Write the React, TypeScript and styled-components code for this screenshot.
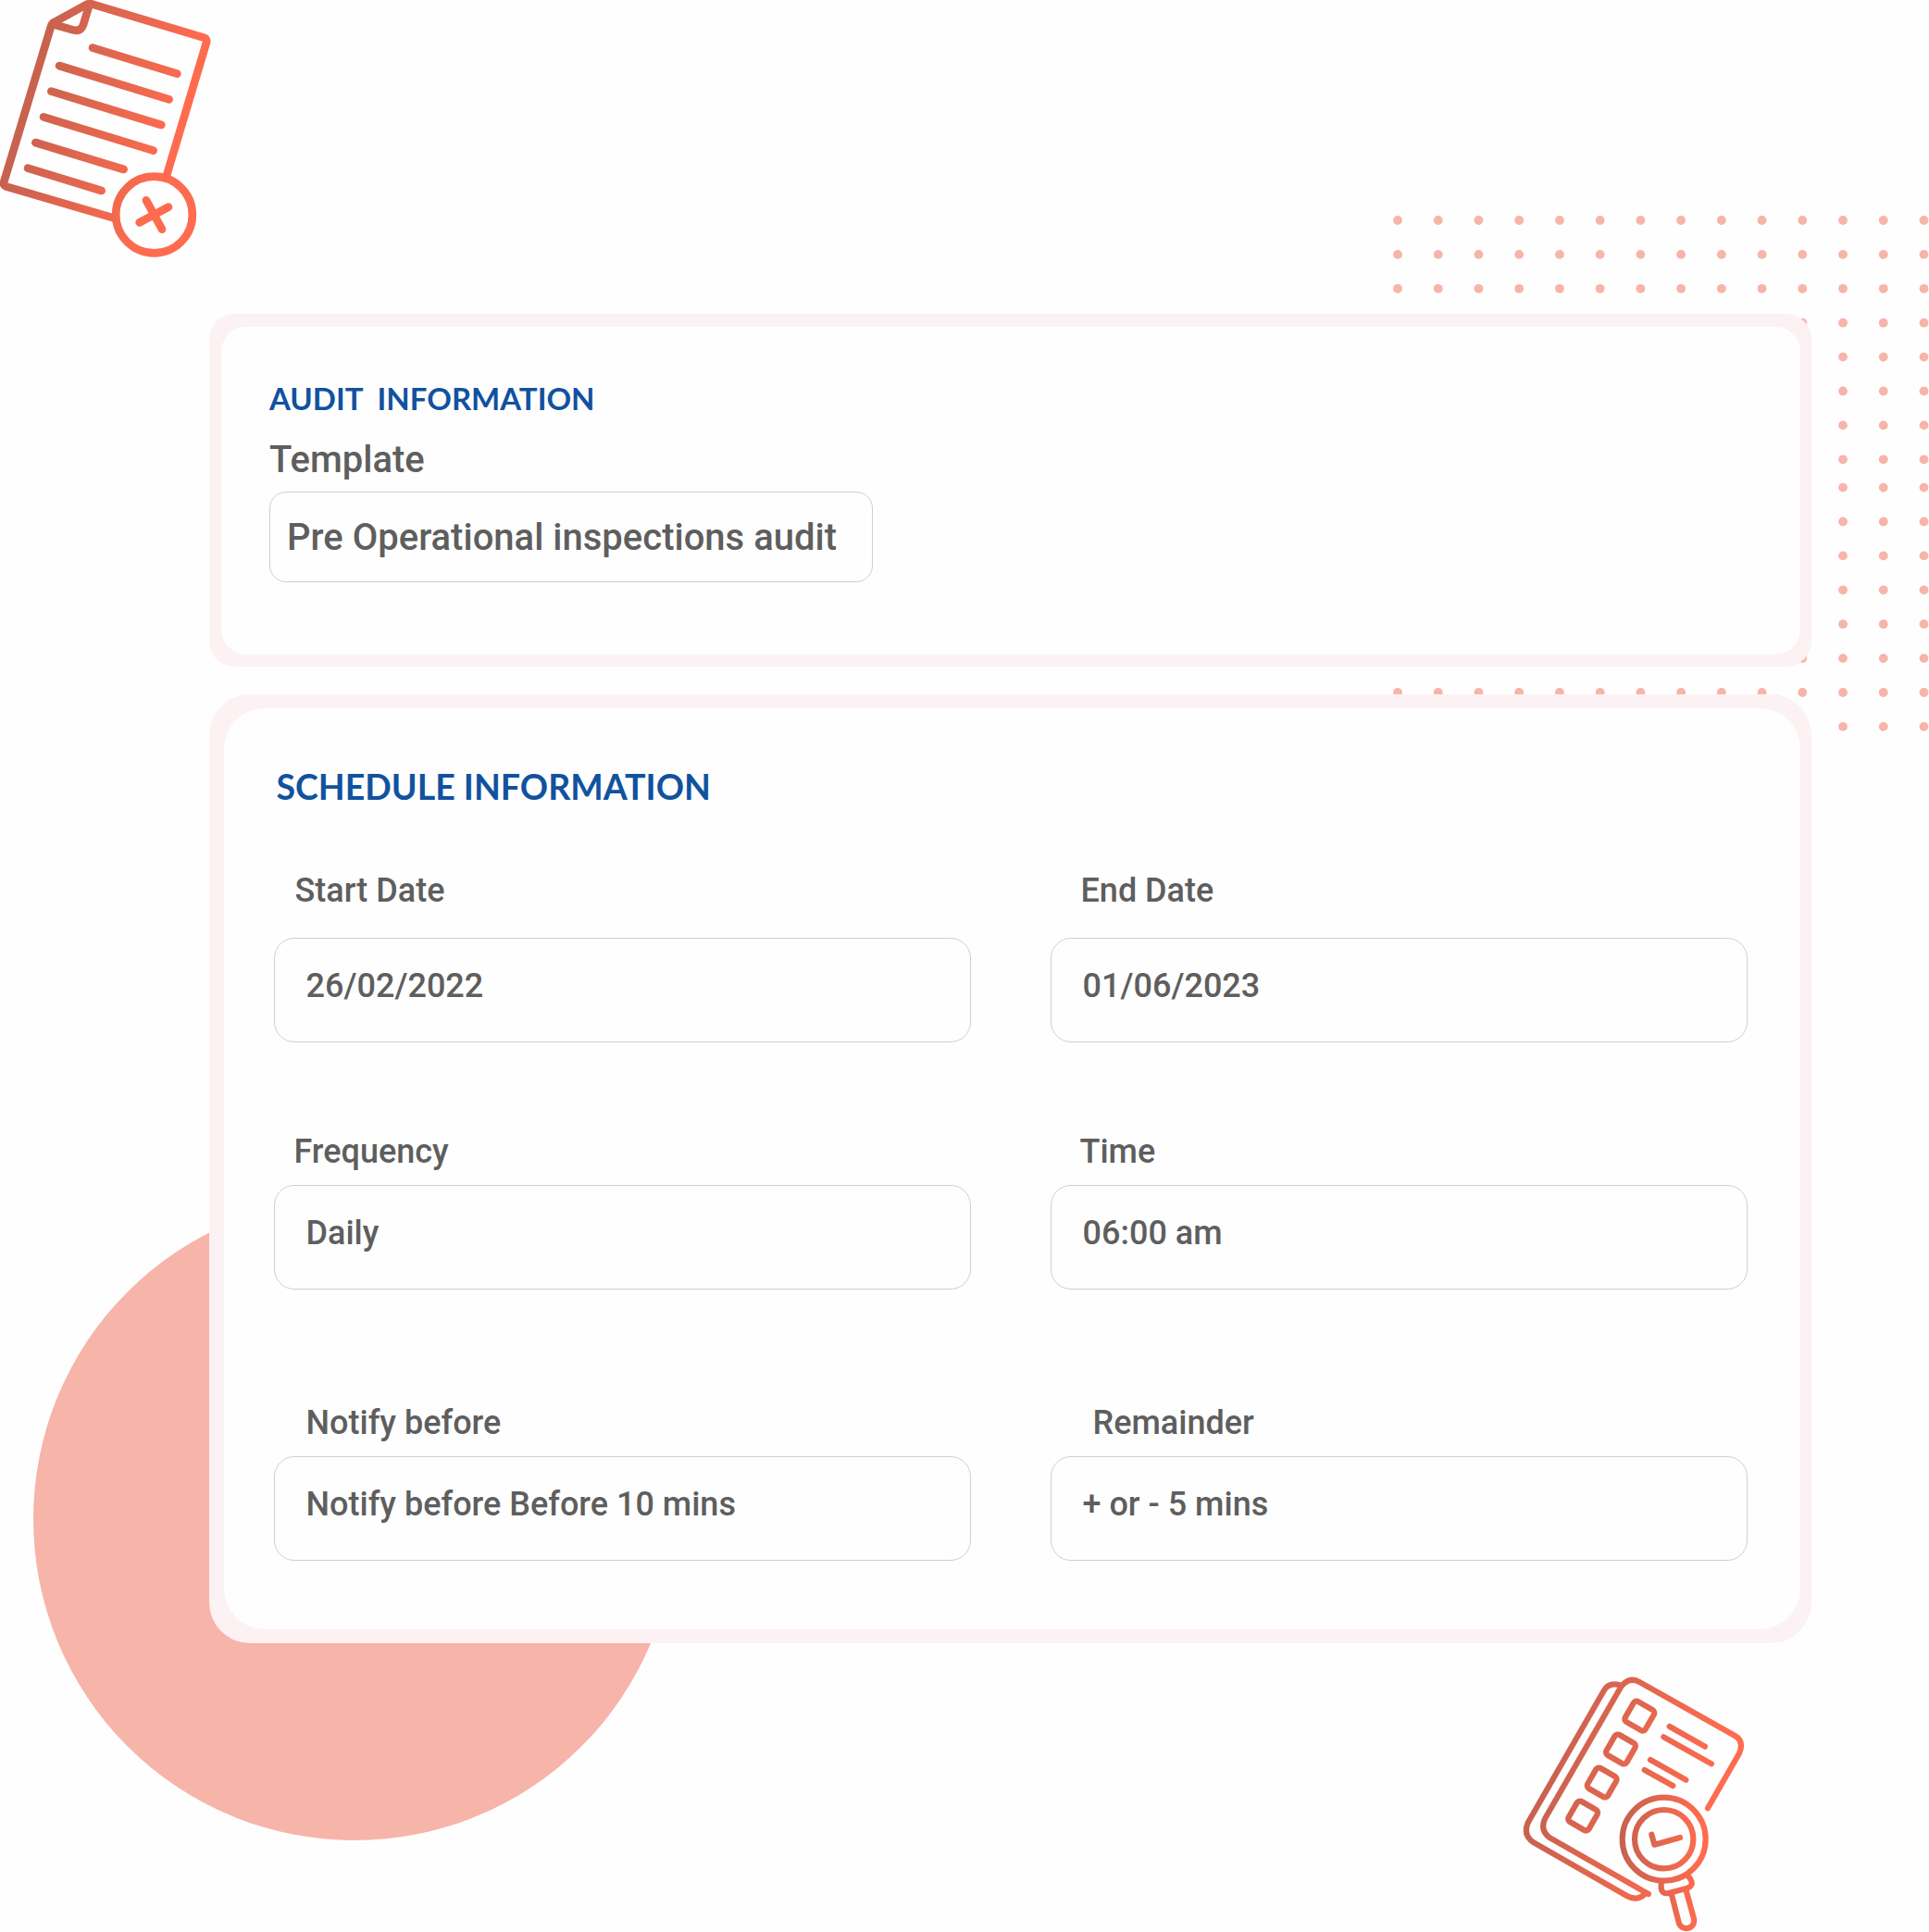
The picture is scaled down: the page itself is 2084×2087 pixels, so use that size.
import React from "react";
import styled, { createGlobalStyle } from "styled-components";

const GlobalStyle = createGlobalStyle`
  *, *::before, *::after { box-sizing: border-box; }
  body { margin: 0; background: #fefefe; }
`;

const Page = styled.main`
  position: relative;
  width: 2084px;
  height: 2087px;
  padding: 339px 127px 0 226px;
  overflow: hidden;
  background: #fefefe;
  display: flex;
  flex-direction: column;
  gap: 29.5px;
`;

const Disc = styled.div`
  position: absolute;
  left: 35.5px;
  top: 1294px;
  width: 694px;
  height: 694px;
  border-radius: 50%;
  background: #f7b4a9;
`;

const Ornament = styled.svg<{ $x: number; $y: number }>`
  position: absolute;
  left: ${(p) => p.$x}px;
  top: ${(p) => p.$y}px;
  overflow: visible;
`;

const Frame = styled.section<{ $height: number; $pad: string; $radius: number }>`
  position: relative;
  display: flex;
  height: ${(p) => p.$height}px;
  padding: ${(p) => p.$pad};
  border-radius: ${(p) => p.$radius}px;
  background: #fcf1f3;
`;

const Panel = styled.div<{ $pad: string; $radius: number }>`
  flex: 1;
  padding: ${(p) => p.$pad};
  border-radius: ${(p) => p.$radius}px;
  background: #fefefe;
`;

const Title = styled.h2<{ $size: number; $line: number; $spacing?: number }>`
  margin: 0;
  font-family: Lato, sans-serif;
  font-weight: 700;
  font-size: ${(p) => p.$size}px;
  line-height: ${(p) => p.$line}px;
  letter-spacing: ${(p) => p.$spacing ?? 0}px;
  color: #11529f;
  white-space: pre;
`;

const FieldGrid = styled.div`
  display: grid;
  grid-template-columns: 753px 753px;
  column-gap: 86px;
  margin: 66.5px 0 0 -3px;
`;

const Field = styled.div<{ $before?: number }>`
  display: flex;
  flex-direction: column;
  padding-top: ${(p) => p.$before ?? 0}px;
`;

const Label = styled.span<{ $indent?: number; $gap: number; $large?: boolean }>`
  margin: 0 0 ${(p) => p.$gap}px ${(p) => p.$indent ?? 0}px;
  font: 500 ${(p) => (p.$large ? "40px/48px" : "36px/44px")} Roboto, sans-serif;
  color: #5e5e5e;
  white-space: nowrap;
`;

const ValueBox = styled.div<{ $large?: boolean }>`
  width: ${(p) => (p.$large ? "652px" : "100%")};
  height: ${(p) => (p.$large ? 98 : 113)}px;
  padding: ${(p) => (p.$large ? "25px 0 0 18px" : "28.4px 0 0 34px")};
  border: 1px solid #d0d0d0;
  border-radius: ${(p) => (p.$large ? 18 : 22)}px;
  font: 500 ${(p) => (p.$large ? "40px/48px" : "36px/44px")} Roboto, sans-serif;
  color: #5e5e5e;
  white-space: nowrap;
`;

const scheduleFields = [
  { label: "Start Date", value: "26/02/2022", indent: 23, gap: 29.3, before: 0 },
  { label: "End Date", value: "01/06/2023", indent: 33, gap: 29.3, before: 0 },
  { label: "Frequency", value: "Daily", indent: 22, gap: 14.3, before: 95.7 },
  { label: "Time", value: "06:00 am", indent: 32, gap: 14.3, before: 95.7 },
  { label: "Notify before", value: "Notify before Before 10 mins", indent: 35, gap: 14.3, before: 121.7 },
  { label: "Remainder", value: "+ or - 5 mins", indent: 46, gap: 14.3, before: 121.7 },
];

const DotField = () => {
  const rows = [0, 288.6].flatMap((start) => Array.from({ length: 8 }, (_, i) => start + i * 36.9));
  return (
    <Ornament $x={1510} $y={238.2} width={574} height={550} fill="#f7b4a9">
      {rows.map((y) =>
        Array.from({ length: 14 }, (_, c) => <circle key={`${y}-${c}`} cx={c * 43.73} cy={y} r={4.9} />)
      )}
    </Ornament>
  );
};

const RejectedDocument = () => (
  <Ornament $x={0} $y={0} width={290} height={290} viewBox="0 0 870 870" fill="none">
    <defs>
      <linearGradient id="doc" gradientUnits="userSpaceOnUse" x1="12" y1="595" x2="472" y2="733">
        <stop offset="0" stopColor="#c8624f" />
        <stop offset="1" stopColor="#ff6b4e" />
      </linearGradient>
    </defs>
    <g stroke="url(#doc)" strokeWidth="26" strokeLinecap="round" strokeLinejoin="round">
      <path strokeLinecap="butt" d="M539 572L669 138Q671 126 660 122L300 14Q290 10 280 15L176 72Q168 76 165 86L12 592Q11 601 19 604L370 707" />
      <path d="M289 17L270 80Q261 104 237 97L170 78" />
      <path d="M300 155L574 239M192 213L548 322M166 296L523 405M141 379L497 488M115 462L401 549M90 545L329 618" />
      <circle cx="499.500" cy="696" r="124" />
      <path d="M474 649L525 743M452 721L546 671" />
    </g>
  </Ornament>
);

const AuditBook = () => (
  <Ornament $x={1630} $y={1800} width={290} height={287} viewBox="0 0 870 861" fill="none">
    <defs>
      <linearGradient id="book" gradientUnits="userSpaceOnUse" x1="130" y1="300" x2="640" y2="420">
        <stop offset="0" stopColor="#c8624f" />
        <stop offset="1" stopColor="#ff6b4e" />
      </linearGradient>
      <linearGradient id="lens" gradientUnits="userSpaceOnUse" x1="368" y1="560" x2="620" y2="560">
        <stop offset="0" stopColor="#c8624f" />
        <stop offset="1" stopColor="#ff6b4e" />
      </linearGradient>
    </defs>
    <g stroke="url(#book)" strokeWidth="18.500" strokeLinecap="round" strokeLinejoin="round">
      <path d="M645 460L747 282Q764 243 733 225L422 50Q389 33 364 66L117 494Q100 533 134 556L453 738" />
      <path d="M358 60Q322 52 307 81L62 507Q45 548 81 571L383 744Q416 762 441 738" />
      {[[424, 161], [363, 268.500], [302, 376.500], [240.500, 484.500]].map(([x, y]) => (
        <rect key={y} x={x - 38} y={y - 38} width="76" height="76" rx="11" transform={`rotate(30 ${x} ${y})`} />
      ))}
      <path d="M521 195L636 260M502 229L657 316M459 303L574 368M440 336L532 387" />
    </g>
    <g stroke="url(#lens)" strokeWidth="18.500" strokeLinecap="round" strokeLinejoin="round">
      <circle cx="503" cy="560" r="135" />
      <circle cx="503" cy="560" r="95" />
      <path d="M463 545L472 578L555 555" />
      <path d="M494 702V718Q496 739 518 735L578 719Q602 710 588 688L582 681" />
      <path d="M528 740L551 830A25 25 0 0 0 600 818L575 727" />
    </g>
  </Ornament>
);

export default function App() {
  return (
    <>
      <GlobalStyle />
      <Page>
        <DotField />
        <Disc />
        <RejectedDocument />
        <AuditBook />
        <Frame $height={381} $pad="13.500px 12.500px" $radius={27}>
          <Panel $pad="57.500px 52.500px" $radius={27}>
            <Title $size={33} $line={40}>{"AUDIT  INFORMATION"}</Title>
            <Field $before={23.3}>
              <Label $large $gap={9.7}>Template</Label>
              <ValueBox $large>Pre Operational inspections audit</ValueBox>
            </Field>
          </Panel>
        </Frame>
        <Frame $height={1025} $pad="15px 15.500px" $radius={44}>
          <Panel $pad="61px 57px" $radius={44}>
            <Title $size={37.5} $line={48}>SCHEDULE INFORMATION</Title>
            <FieldGrid>
              {scheduleFields.map((f) => (
                <Field key={f.label} $before={f.before}>
                  <Label $indent={f.indent} $gap={f.gap}>{f.label}</Label>
                  <ValueBox>{f.value}</ValueBox>
                </Field>
              ))}
            </FieldGrid>
          </Panel>
        </Frame>
      </Page>
    </>
  );
}
